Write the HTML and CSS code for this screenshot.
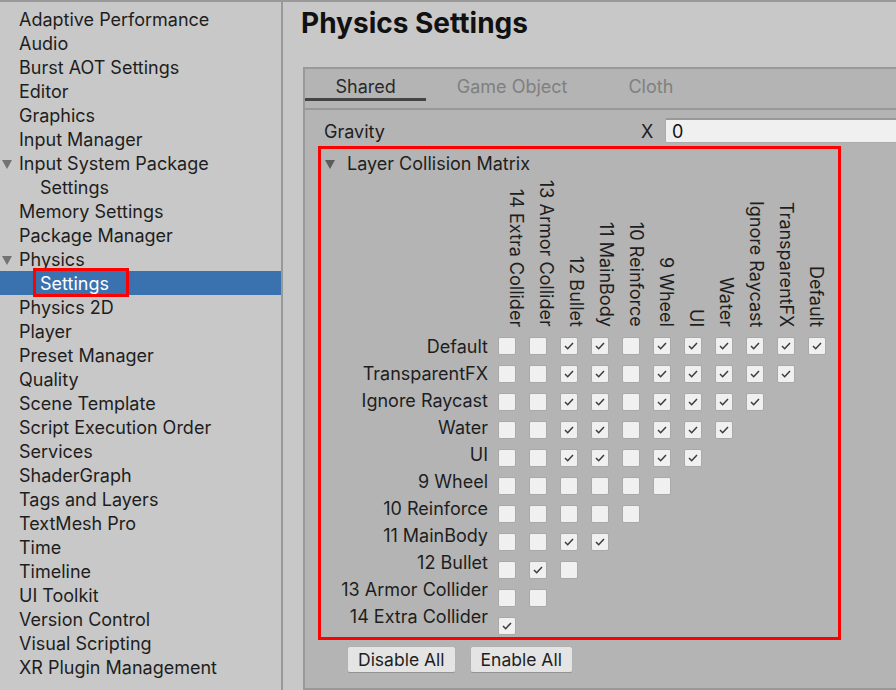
FILE: index.html
```html
<!DOCTYPE html>
<html>
<head>
<meta charset="utf-8">
<title>Physics Settings</title>
<link rel="stylesheet" href="styles.css">
</head>
<body>
<div class="app">
  <nav class="sidebar">
    <div class="item">Adaptive Performance</div>
    <div class="item">Audio</div>
    <div class="item">Burst AOT Settings</div>
    <div class="item">Editor</div>
    <div class="item">Graphics</div>
    <div class="item">Input Manager</div>
    <div class="item"><span class="tri"></span>Input System Package</div>
    <div class="item child">Settings</div>
    <div class="item">Memory Settings</div>
    <div class="item">Package Manager</div>
    <div class="item"><span class="tri"></span>Physics</div>
    <div class="item child selected">Settings<span class="annot"></span></div>
    <div class="item">Physics 2D</div>
    <div class="item">Player</div>
    <div class="item">Preset Manager</div>
    <div class="item">Quality</div>
    <div class="item">Scene Template</div>
    <div class="item">Script Execution Order</div>
    <div class="item">Services</div>
    <div class="item">ShaderGraph</div>
    <div class="item">Tags and Layers</div>
    <div class="item">TextMesh Pro</div>
    <div class="item">Time</div>
    <div class="item">Timeline</div>
    <div class="item">UI Toolkit</div>
    <div class="item">Version Control</div>
    <div class="item">Visual Scripting</div>
    <div class="item">XR Plugin Management</div>
  </nav>
  <main class="main">
    <h1 class="title">Physics Settings</h1>
    <section class="panel">
      <div class="tabs">
        <div class="tab active">Shared</div>
        <div class="tab">Game Object</div>
        <div class="tab">Cloth</div>
      </div>
      <div class="content">
        <div class="field-row">
          <span class="field-label">Gravity</span>
          <span class="axis">X</span>
          <div class="input">0</div>
        </div>
        <div class="matrix-box">
          <div class="foldout"><span class="fold-tri"></span>Layer Collision Matrix</div>
          <div class="matrix">
            <div class="corner"></div>
            <div class="col-labels">
              <div class="col-label">14 Extra Collider</div>
              <div class="col-label">13 Armor Collider</div>
              <div class="col-label">12 Bullet</div>
              <div class="col-label">11 MainBody</div>
              <div class="col-label">10 Reinforce</div>
              <div class="col-label">9 Wheel</div>
              <div class="col-label">UI</div>
              <div class="col-label">Water</div>
              <div class="col-label">Ignore Raycast</div>
              <div class="col-label">TransparentFX</div>
              <div class="col-label">Default</div>
            </div>
            <div class="row-labels">
              <div class="row-label">Default</div>
              <div class="row-label">TransparentFX</div>
              <div class="row-label">Ignore Raycast</div>
              <div class="row-label">Water</div>
              <div class="row-label">UI</div>
              <div class="row-label">9 Wheel</div>
              <div class="row-label">10 Reinforce</div>
              <div class="row-label">11 MainBody</div>
              <div class="row-label">12 Bullet</div>
              <div class="row-label">13 Armor Collider</div>
              <div class="row-label">14 Extra Collider</div>
            </div>
            <div class="cells">
              <div class="cell-row">
                <span class="cb"></span><span class="cb"></span>
                <span class="cb"><svg viewBox="0 0 18 18"><path d="M4.5 9l3 3 6-6.5"/></svg></span>
                <span class="cb"><svg viewBox="0 0 18 18"><path d="M4.5 9l3 3 6-6.5"/></svg></span>
                <span class="cb"></span>
                <span class="cb"><svg viewBox="0 0 18 18"><path d="M4.5 9l3 3 6-6.5"/></svg></span>
                <span class="cb"><svg viewBox="0 0 18 18"><path d="M4.5 9l3 3 6-6.5"/></svg></span>
                <span class="cb"><svg viewBox="0 0 18 18"><path d="M4.5 9l3 3 6-6.5"/></svg></span>
                <span class="cb"><svg viewBox="0 0 18 18"><path d="M4.5 9l3 3 6-6.5"/></svg></span>
                <span class="cb"><svg viewBox="0 0 18 18"><path d="M4.5 9l3 3 6-6.5"/></svg></span>
                <span class="cb"><svg viewBox="0 0 18 18"><path d="M4.5 9l3 3 6-6.5"/></svg></span>
              </div>
              <div class="cell-row">
                <span class="cb"></span><span class="cb"></span>
                <span class="cb"><svg viewBox="0 0 18 18"><path d="M4.5 9l3 3 6-6.5"/></svg></span>
                <span class="cb"><svg viewBox="0 0 18 18"><path d="M4.5 9l3 3 6-6.5"/></svg></span>
                <span class="cb"></span>
                <span class="cb"><svg viewBox="0 0 18 18"><path d="M4.5 9l3 3 6-6.5"/></svg></span>
                <span class="cb"><svg viewBox="0 0 18 18"><path d="M4.5 9l3 3 6-6.5"/></svg></span>
                <span class="cb"><svg viewBox="0 0 18 18"><path d="M4.5 9l3 3 6-6.5"/></svg></span>
                <span class="cb"><svg viewBox="0 0 18 18"><path d="M4.5 9l3 3 6-6.5"/></svg></span>
                <span class="cb"><svg viewBox="0 0 18 18"><path d="M4.5 9l3 3 6-6.5"/></svg></span>
              </div>
              <div class="cell-row">
                <span class="cb"></span><span class="cb"></span>
                <span class="cb"><svg viewBox="0 0 18 18"><path d="M4.5 9l3 3 6-6.5"/></svg></span>
                <span class="cb"><svg viewBox="0 0 18 18"><path d="M4.5 9l3 3 6-6.5"/></svg></span>
                <span class="cb"></span>
                <span class="cb"><svg viewBox="0 0 18 18"><path d="M4.5 9l3 3 6-6.5"/></svg></span>
                <span class="cb"><svg viewBox="0 0 18 18"><path d="M4.5 9l3 3 6-6.5"/></svg></span>
                <span class="cb"><svg viewBox="0 0 18 18"><path d="M4.5 9l3 3 6-6.5"/></svg></span>
                <span class="cb"><svg viewBox="0 0 18 18"><path d="M4.5 9l3 3 6-6.5"/></svg></span>
              </div>
              <div class="cell-row">
                <span class="cb"></span><span class="cb"></span>
                <span class="cb"><svg viewBox="0 0 18 18"><path d="M4.5 9l3 3 6-6.5"/></svg></span>
                <span class="cb"><svg viewBox="0 0 18 18"><path d="M4.5 9l3 3 6-6.5"/></svg></span>
                <span class="cb"></span>
                <span class="cb"><svg viewBox="0 0 18 18"><path d="M4.5 9l3 3 6-6.5"/></svg></span>
                <span class="cb"><svg viewBox="0 0 18 18"><path d="M4.5 9l3 3 6-6.5"/></svg></span>
                <span class="cb"><svg viewBox="0 0 18 18"><path d="M4.5 9l3 3 6-6.5"/></svg></span>
              </div>
              <div class="cell-row">
                <span class="cb"></span><span class="cb"></span>
                <span class="cb"><svg viewBox="0 0 18 18"><path d="M4.5 9l3 3 6-6.5"/></svg></span>
                <span class="cb"><svg viewBox="0 0 18 18"><path d="M4.5 9l3 3 6-6.5"/></svg></span>
                <span class="cb"></span>
                <span class="cb"><svg viewBox="0 0 18 18"><path d="M4.5 9l3 3 6-6.5"/></svg></span>
                <span class="cb"><svg viewBox="0 0 18 18"><path d="M4.5 9l3 3 6-6.5"/></svg></span>
              </div>
              <div class="cell-row">
                <span class="cb"></span><span class="cb"></span><span class="cb"></span><span class="cb"></span><span class="cb"></span><span class="cb"></span>
              </div>
              <div class="cell-row">
                <span class="cb"></span><span class="cb"></span><span class="cb"></span><span class="cb"></span><span class="cb"></span>
              </div>
              <div class="cell-row">
                <span class="cb"></span><span class="cb"></span>
                <span class="cb"><svg viewBox="0 0 18 18"><path d="M4.5 9l3 3 6-6.5"/></svg></span>
                <span class="cb"><svg viewBox="0 0 18 18"><path d="M4.5 9l3 3 6-6.5"/></svg></span>
              </div>
              <div class="cell-row">
                <span class="cb"></span>
                <span class="cb"><svg viewBox="0 0 18 18"><path d="M4.5 9l3 3 6-6.5"/></svg></span>
                <span class="cb"></span>
              </div>
              <div class="cell-row">
                <span class="cb"></span><span class="cb"></span>
              </div>
              <div class="cell-row">
                <span class="cb"><svg viewBox="0 0 18 18"><path d="M4.5 9l3 3 6-6.5"/></svg></span>
              </div>
            </div>
          </div>
        </div>
        <div class="buttons">
          <button class="btn">Disable All</button>
          <button class="btn">Enable All</button>
        </div>
      </div>
    </section>
  </main>
</div>
</body>
</html>
```
FILE: styles.css
```css
* { box-sizing: border-box; margin: 0; padding: 0; }
html, body { width: 896px; height: 690px; overflow: hidden; }
body {
  font-family: Inter, "Noto Sans", sans-serif;
  font-size: 18px;
  color: #1e1e1e;
  background: #c8c8c8;
}
.app {
  display: flex;
  height: 690px;
  border-top: 2px solid #999;
}
.sidebar {
  width: 283px;
  flex: none;
  border-right: 2px solid #999;
  padding-top: 5px;
}
.item {
  position: relative;
  height: 24px;
  line-height: 25px;
  padding-left: 19px;
  white-space: nowrap;
}
.item.child { padding-left: 40px; }
.item.selected { background: #3a72b0; color: #fff; }
.tri {
  display: inline-block;
  width: 0;
  height: 0;
  border-left: 5px solid transparent;
  border-right: 5px solid transparent;
  border-top: 9px solid #737373;
  margin-left: -17px;
  margin-right: 7px;
  vertical-align: 1px;
}
.annot {
  position: absolute;
  left: 33px;
  top: -3px;
  width: 96px;
  height: 29px;
  border: 3px solid #f00;
}
.main {
  flex: 1;
  min-width: 0;
  padding-left: 20px;
}
.title {
  font-size: 28px;
  font-weight: 700;
  line-height: 32px;
  padding-top: 5px;
  margin-left: -2px;
  height: 65px;
  color: #111;
}
.panel {
  width: 640px;
  height: 623px;
  background: #b4b4b4;
  border: 2px solid #999;
  border-right: none;
}
.tabs {
  display: flex;
  padding-bottom: 7px;
  border-bottom: 2px solid #999;
}
.tab {
  padding: 5px 30.5px 0;
  line-height: 25px;
  height: 32px;
  border-bottom: 3px solid transparent;
  color: #808080;
}
.tab.active { color: #2a2a2a; border-bottom-color: #444; }
.content { padding: 8px 0 0 13px; }
.field-row {
  display: flex;
  align-items: center;
  height: 25px;
}
.field-label { width: 323px; padding-left: 6px; padding-top: 2px; }
.axis { width: 24px; padding-top: 2px; }
.input {
  flex: 1;
  height: 25px;
  line-height: 24px;
  background: #f0f0f0;
  border: 1px solid #ababab;
  border-top: 2px solid #999;
  border-radius: 2px;
  padding-left: 6px;
  color: #111;
}
.matrix-box {
  margin-top: 3px;
  width: 523px;
  height: 494px;
  border: 3px solid #f00;
}
.foldout {
  height: 28px;
  line-height: 29px;
  padding-left: 4px;
}
.fold-tri {
  display: inline-block;
  width: 0;
  height: 0;
  border-left: 5px solid transparent;
  border-right: 5px solid transparent;
  border-top: 9px solid #5c5c5c;
  margin-right: 12px;
  vertical-align: 1px;
}
.matrix {
  display: grid;
  grid-template-columns: 177px auto;
  grid-template-rows: 150px auto;
}
.col-labels {
  display: flex;
  padding-left: 2.5px;
}
.col-label {
  writing-mode: vertical-rl;
  width: 30px;
  height: 150px;
  line-height: 30px;
  text-align: end;
  white-space: nowrap;
}
.row-labels { padding-top: 6px; padding-right: 10px; }
.row-label {
  height: 27px;
  line-height: 28px;
  text-align: right;
  white-space: nowrap;
}
.cells { padding-top: 10px; }
.cell-row {
  display: flex;
  gap: 13px;
  height: 18px;
  margin-bottom: 10px;
}
.cb {
  width: 18px;
  height: 18px;
  flex: none;
  background: #f0f0f0;
  border: 1px solid #a9a9a9;
  border-radius: 2px;
  display: flex;
}
.cb svg {
  width: 16px;
  height: 16px;
  fill: none;
  stroke: #3c3c3c;
  stroke-width: 1.7;
}
.buttons {
  display: flex;
  gap: 14px;
  margin-top: 6px;
  padding-left: 29px;
}
.btn {
  font: inherit;
  font-size: 17.5px;
  color: #1e1e1e;
  height: 27px;
  line-height: 25px;
  padding: 0 10px;
  background: #e4e4e4;
  border: 1px solid #b2b2b2;
  border-bottom-color: #939393;
  border-radius: 3px;
}
```
